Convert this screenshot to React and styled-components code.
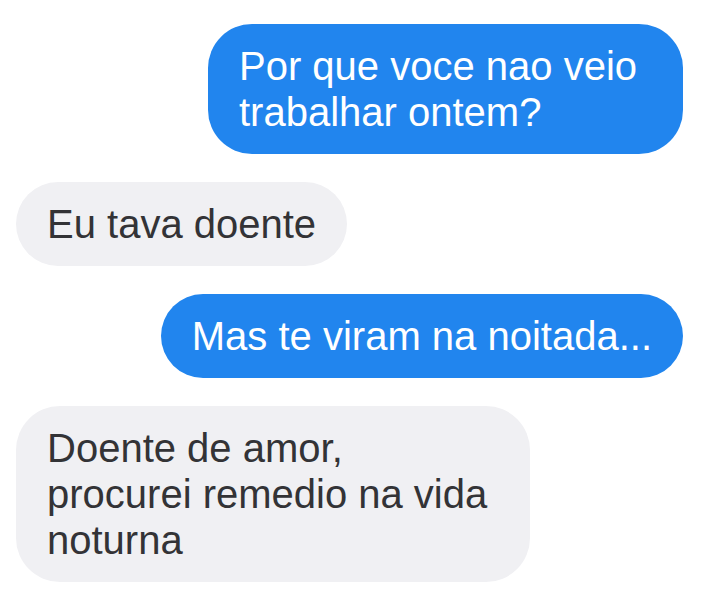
import React from "react";
import styled, { createGlobalStyle } from "styled-components";

const GlobalStyle = createGlobalStyle`
  html, body {
    margin: 0;
    padding: 0;
    background: #ffffff;
  }
  body {
    font-family: "Liberation Sans", Arial, sans-serif;
  }
`;

const messages = [
  { id: 1, mine: true, maxW: 475, lines: ["Por que voce nao veio trabalhar ontem?"] },
  { id: 2, mine: false, maxW: 520, lines: ["Eu tava doente"] },
  { id: 3, mine: true, maxW: 560, lines: ["Mas te viram na noitada..."] },
  { id: 4, mine: false, maxW: 514, lines: ["Doente de amor,", "procurei remedio na vida noturna"] },
];

function App() {
  return (
    <>
      <GlobalStyle />
      <Thread>
        {messages.map((m) => (
          <Row key={m.id} $mine={m.mine}>
            <Bubble $mine={m.mine} $maxW={m.maxW}>
              {m.lines.map((l, i) => (
                <React.Fragment key={i}>
                  {i > 0 && <br />}
                  {l}
                </React.Fragment>
              ))}
            </Bubble>
          </Row>
        ))}
      </Thread>
    </>
  );
}

const Thread = styled.div`
  width: 720px;
  height: 593px;
  box-sizing: border-box;
  padding: 24px 37px 0 16px;
  display: flex;
  flex-direction: column;
  gap: 28px;
  overflow: hidden;
`;

const Row = styled.div`
  display: flex;
  justify-content: ${(p) => (p.$mine ? "flex-end" : "flex-start")};
`;

const Bubble = styled.div`
  max-width: ${(p) => p.$maxW}px;
  box-sizing: border-box;
  padding: 19px 31px;
  border-radius: 44px;
  font-size: 40px;
  line-height: 46px;
  background: ${(p) => (p.$mine ? "#2185ee" : "#f0f0f3")};
  color: ${(p) => (p.$mine ? "#ffffff" : "#333336")};
`;

export default App;
